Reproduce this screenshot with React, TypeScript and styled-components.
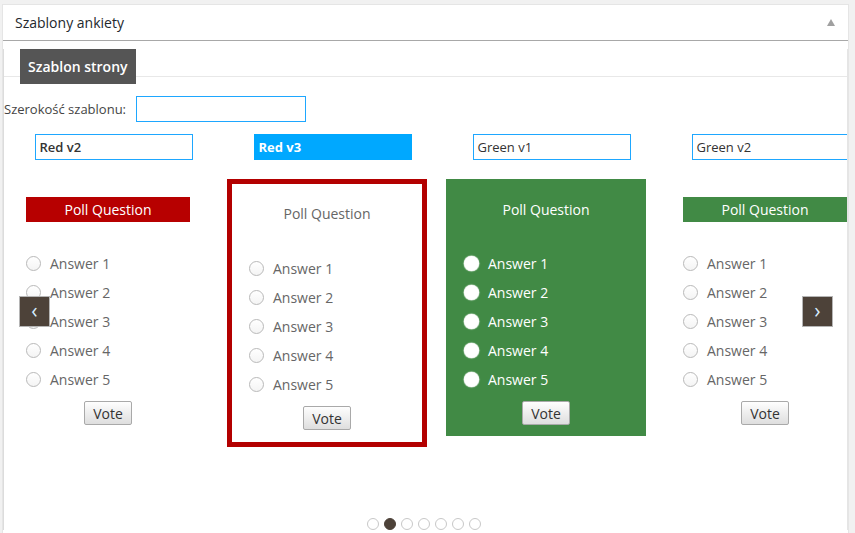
import React from "react";
import styled, { createGlobalStyle, css } from "styled-components";

type Look = "redBar" | "outlined" | "green" | "greenBar";

interface Template {
  name: string;
  look: Look;
  active?: boolean;
  strong?: boolean;
}

const templates: Template[] = [
  { name: "Red v2", look: "redBar", strong: true },
  { name: "Red v3", look: "outlined", active: true, strong: true },
  { name: "Green v1", look: "green" },
  { name: "Green v2", look: "greenBar" },
];

const answers = ["Answer 1", "Answer 2", "Answer 3", "Answer 4", "Answer 5"];

const GlobalStyle = createGlobalStyle`
  html, body {
    margin: 0;
    padding: 0;
    overflow: hidden;
  }
  body {
    background: #f1f1f1;
    font-family: "Open Sans", "Liberation Sans", sans-serif;
    color: #444;
  }
`;

const Postbox = styled.div`
  box-sizing: border-box;
  margin: 4px 0 0 2px;
  width: 847px;
  height: 529px;
  overflow: hidden;
  background: #fff;
  border: 1px solid #e5e5e5;
  border-bottom: none;
`;

const Header = styled.div`
  height: 35px;
  display: flex;
  align-items: center;
  justify-content: space-between;
  padding: 0 13px 0 12px;
  border-bottom: 1px solid #a8a8a8;
  font-size: 14px;
  color: #23282d;
`;

const Panel = styled.div`
  margin-top: 16px;
  min-height: 480px;
  border-left: 1px solid #dcdcdc;
  border-right: 1px solid #e5e5e5;
`;

const TabNav = styled.div`
  display: flex;
  align-items: flex-start;
  margin-top: -8px;
  height: 27px;
  padding-left: 16px;
  border-bottom: 1px solid #e8e8e8;
`;

const Tab = styled.div`
  height: 35px;
  line-height: 35px;
  padding: 0 8px;
  background: #555;
  color: #fff;
  font-size: 14px;
  font-weight: 600;
`;

const WidthRow = styled.div`
  display: flex;
  align-items: center;
  margin-top: 19px;
  font-size: 13px;
  color: #444;
`;

const TextInput = styled.input`
  box-sizing: border-box;
  width: 170px;
  height: 26px;
  margin-left: 10px;
  border: 1px solid #1ea7ff;
  outline: none;
`;

const Carousel = styled.div`
  position: relative;
  margin-top: 12px;
`;

const Viewport = styled.div`
  overflow: hidden;
`;

const Track = styled.div`
  display: flex;
`;

const Slide = styled.div`
  flex: 0 0 219px;
  display: flex;
  flex-direction: column;
`;

const NameInput = styled.div<{ $active?: boolean; $strong?: boolean }>`
  box-sizing: border-box;
  align-self: center;
  width: 158px;
  height: 26px;
  line-height: 24px;
  padding: 0 4px;
  font-size: 13px;
  font-weight: ${(p) => (p.$strong ? 600 : 400)};
  border: 1px solid #1ea7ff;
  color: #333;
  white-space: nowrap;
  ${(p) =>
    p.$active
      ? css`
          background: #00a8ff;
          border-color: #00a8ff;
          color: #fff;
          font-weight: 700;
        `
      : ""}
`;

const Card = styled.div<{ $look: Look }>`
  box-sizing: border-box;
  width: 200px;
  margin: 19px 0 0 4px;
  padding: 17px 17px 10px;
  border: 1px solid transparent;
  display: flex;
  flex-direction: column;
  ${(p) =>
    p.$look === "outlined" &&
    css`
      border: 5px solid #b30000;
      padding-bottom: 12px;
    `}
  ${(p) =>
    p.$look === "green" &&
    css`
      background: #418a45;
      border-color: #418a45;
    `}
`;

const Title = styled.div<{ $look: Look }>`
  height: 25px;
  line-height: 25px;
  text-align: center;
  font-size: 14px;
  color: #fff;
  ${(p) => p.$look === "redBar" && "background: #b70000;"}
  ${(p) => p.$look === "greenBar" && "background: #418a45;"}
  ${(p) => p.$look === "outlined" && "color: #666;"}
`;

const AnswerList = styled.div<{ $gap: number }>`
  margin-top: ${(p) => p.$gap}px;
  display: flex;
  flex-direction: column;
`;

const AnswerRow = styled.div<{ $light?: boolean }>`
  height: 29px;
  display: flex;
  align-items: center;
  font-size: 14px;
  color: ${(p) => (p.$light ? "#fff" : "#666")};
`;

const Radio = styled.span<{ $filled?: boolean }>`
  box-sizing: border-box;
  width: 15px;
  height: 15px;
  margin-right: 9px;
  border-radius: 50%;
  flex-shrink: 0;
  ${(p) =>
    p.$filled
      ? css`
          background: #fff;
          box-shadow: 0 0 1px 0.5px rgba(255, 255, 255, 0.8);
        `
      : css`
          background: linear-gradient(#fff, #f4f4f4);
          border: 1px solid #b9b9b9;
        `}
`;

const VoteButton = styled.button`
  align-self: center;
  margin-top: 7px;
  width: 48px;
  height: 24px;
  padding: 0;
  border: 1px solid #a9a9a9;
  border-radius: 2px;
  background: linear-gradient(#fefefe, #dedede);
  font-family: "Open Sans", "Liberation Sans", sans-serif;
  font-size: 14px;
  color: #333;
`;

const Arrow = styled.div<{ $side: "left" | "right" }>`
  position: absolute;
  top: 162px;
  ${(p) => (p.$side === "left" ? "left: 15px;" : "right: 14px;")}
  box-sizing: border-box;
  width: 31px;
  height: 31px;
  display: flex;
  align-items: center;
  justify-content: center;
  background: #4d4239;
  border: 1px solid #b5b5b5;
  color: #d6ecff;
  font-size: 21px;
  line-height: 1;
  padding-bottom: 3px;
`;

const Dots = styled.div`
  display: flex;
  justify-content: center;
  gap: 5px;
  margin-top: 71px;
  padding-right: 4px;
`;

const Dot = styled.span<{ $active?: boolean }>`
  box-sizing: border-box;
  width: 12px;
  height: 12px;
  border-radius: 50%;
  border: 1.5px solid ${(p) => (p.$active ? "#4d4239" : "#c8c8c8")};
  background: ${(p) => (p.$active ? "#4d4239" : "#fff")};
`;

function PollCard({ look }: { look: Look }) {
  const light = look === "green";
  return (
    <Card $look={look}>
      <Title $look={look}>Poll Question</Title>
      <AnswerList $gap={look === "outlined" ? 28 : 27}>
        {answers.map((a) => (
          <AnswerRow key={a} $light={light}>
            <Radio $filled={light} />
            {a}
          </AnswerRow>
        ))}
      </AnswerList>
      <VoteButton>Vote</VoteButton>
    </Card>
  );
}

export default function App() {
  return (
    <>
      <GlobalStyle />
      <Postbox>
        <Header>
          <span>Szablony ankiety</span>
          <svg width="8" height="7" viewBox="0 0 8 7">
            <polygon points="4,0 8,7 0,7" fill="#a0a0a0" />
          </svg>
        </Header>
        <Panel>
          <TabNav>
            <Tab>Szablon strony</Tab>
          </TabNav>
          <WidthRow>
            Szerokość szablonu:
            <TextInput type="text" />
          </WidthRow>
          <Carousel>
            <Viewport>
              <Track>
                {templates.map((t) => (
                  <Slide key={t.name}>
                    <NameInput $active={t.active} $strong={t.strong}>
                      {t.name}
                    </NameInput>
                    <PollCard look={t.look} />
                  </Slide>
                ))}
              </Track>
            </Viewport>
            <Arrow $side="left">‹</Arrow>
            <Arrow $side="right">›</Arrow>
          </Carousel>
          <Dots>
            {Array.from({ length: 7 }).map((_, i) => (
              <Dot key={i} $active={i === 1} />
            ))}
          </Dots>
        </Panel>
      </Postbox>
    </>
  );
}
